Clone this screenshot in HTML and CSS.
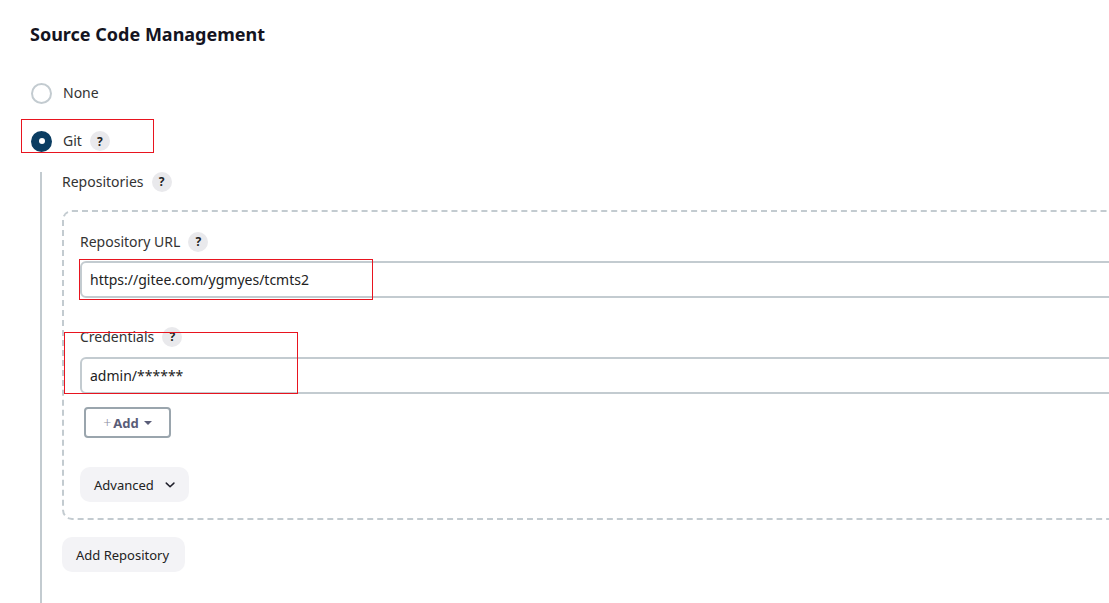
FILE: index.html
```html
<!DOCTYPE html>
<html>
<head>
<meta charset="utf-8">
<link rel="stylesheet" href="styles.css">
</head>
<body>
<div class="page">
  <h1 class="title">Source Code Management</h1>

  <div class="radio-row none-row">
    <span class="radio"></span>
    <span class="radio-label">None</span>
  </div>

  <div class="radio-row git-row">
    <span class="radio checked"></span>
    <span class="radio-label">Git</span>
    <span class="help">?</span>
    <span class="mark mark-git"></span>
  </div>

  <div class="git-body">
    <div class="field-label">Repositories <span class="help">?</span></div>

    <div class="repo-box">
      <div class="field-label">Repository URL <span class="help">?</span></div>
      <div class="url-block">
        <span class="mark mark-url"></span>
        <div class="input">https://gitee.com/ygmyes/tcmts2</div>
      </div>

      <div class="cred-block">
        <div class="field-label cred-label">Credentials <span class="help">?</span></div>
        <div class="input cred-input">admin/******</div>
        <span class="mark mark-cred"></span>
      </div>

      <button class="add-btn"><span class="plus">+</span><b>Add</b><span class="caret"></span></button>

      <button class="soft-btn advanced">Advanced
        <svg class="chev" width="12" height="8" viewBox="0 0 12 8"><path d="M1.5 1.8 L6 6 L10.5 1.8" fill="none" stroke="#1f1f2a" stroke-width="1.8" stroke-linecap="round" stroke-linejoin="round"/></svg>
      </button>
    </div>

    <button class="soft-btn add-repo">Add Repository</button>
  </div>
</div>
</body>
</html>
```

FILE: styles.css
```css
html, body {
  margin: 0;
  padding: 0;
  background: #fff;
  overflow: hidden;
  width: 1109px;
  height: 603px;
}
body {
  font-family: "Noto Sans", "Open Sans", sans-serif;
  color: #333;
  font-size: 14px;
}
.page {
  padding: 22px 0 0 30px;
  width: 1300px;
}
.title {
  margin: 0;
  font-size: 18px;
  line-height: 24px;
  font-weight: 700;
  color: #14141f;
}
.radio-row {
  display: flex;
  align-items: center;
  height: 24px;
  position: relative;
}
.none-row { margin-top: 35px; }
.git-row { margin-top: 24px; }
.radio {
  box-sizing: border-box;
  width: 21px;
  height: 21px;
  border-radius: 50%;
  border: 2px solid #c3cbd0;
  margin-left: 1px;
  margin-right: 11px;
  display: flex;
  align-items: center;
  justify-content: center;
}
.radio.checked {
  background: #0b3d62;
  border-color: #0b3d62;
}
.radio.checked::after {
  content: "";
  width: 6px;
  height: 6px;
  border-radius: 50%;
  background: #fff;
}
.radio-label {
  line-height: 24px;
}
.help {
  display: inline-flex;
  align-items: center;
  justify-content: center;
  width: 20px;
  height: 20px;
  border-radius: 50%;
  background: #e9e9ec;
  color: #222;
  font-size: 12px;
  font-weight: 700;
  margin-left: 8px;
  vertical-align: middle;
}
.mark {
  position: absolute;
  z-index: 5;
  box-sizing: border-box;
  border: 1px solid #e8141f;
  pointer-events: none;
}
.mark-git {
  left: -9px;
  top: -10px;
  width: 133px;
  height: 34px;
}
.git-body {
  margin-top: 19px;
  margin-left: 10px;
  border-left: 2px solid #c3cbd0;
  padding-left: 20px;
  padding-bottom: 40px;
}
.field-label {
  display: flex;
  align-items: center;
  height: 20px;
  line-height: 20px;
}
.repo-box {
  margin-top: 18px;
  box-sizing: border-box;
  width: 1100px;
  border: 2px dashed #c3cbd0;
  border-radius: 10px;
  padding: 20px 16px 16px 16px;
}
.url-block {
  position: relative;
  margin-top: 9px;
}
.input {
  box-sizing: border-box;
  height: 37px;
  border: 2px solid #c3cbd0;
  border-radius: 6px;
  padding: 0 8px;
  display: flex;
  align-items: center;
  color: #222;
}
.mark-url {
  left: -1px;
  top: -2px;
  width: 294px;
  height: 41px;
}
.cred-block {
  position: relative;
  margin-top: 29px;
}
.cred-input {
  margin-top: 10px;
}
.mark-cred {
  left: -16px;
  top: 5px;
  width: 234px;
  height: 62px;
}
.add-btn {
  display: flex;
  align-items: center;
  margin-top: 13px;
  margin-left: 4px;
  box-sizing: border-box;
  height: 31px;
  width: 87px;
  justify-content: center;
  background: #fff;
  border: 2px solid #9aa5ad;
  border-radius: 4px;
  font-family: inherit;
  font-size: 13px;
  color: #5a5d78;
  padding: 0;
}
.add-btn .plus {
  font-weight: 300;
  color: #8a8ca0;
  margin-right: 2px;
  font-size: 14px;
}
.add-btn b { font-weight: 700; }
.add-btn .caret {
  width: 0;
  height: 0;
  border-left: 4px solid transparent;
  border-right: 4px solid transparent;
  border-top: 4px solid #5a5d78;
  margin-left: 5px;
}
.soft-btn {
  display: flex;
  align-items: center;
  box-sizing: border-box;
  height: 35px;
  border: none;
  border-radius: 10px;
  background: #f3f3f6;
  font-family: inherit;
  font-size: 13px;
  color: #222;
  padding: 0 14px;
}
.advanced {
  margin-top: 29px;
  width: 109px;
}
.chev { margin-left: 11px; }
.add-repo {
  margin-top: 17px;
  width: 123px;
}
```
